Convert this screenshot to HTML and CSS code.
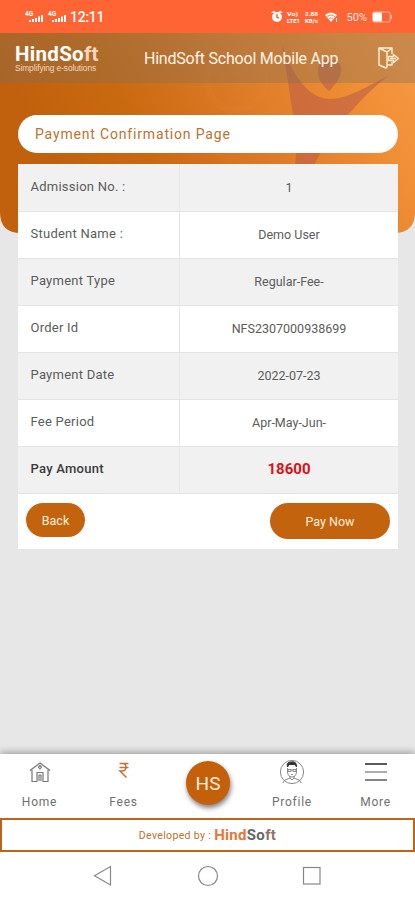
FILE: index.html
```html
<!DOCTYPE html>
<html lang="en">
<head>
<meta charset="utf-8">
<title>Payment Confirmation</title>
<link rel="stylesheet" href="styles.css">
</head>
<body>
<div class="phone">
  <svg class="hero" viewBox="0 0 415 200" preserveAspectRatio="none">
    <defs>
      <linearGradient id="g" x1="0" y1="0.25" x2="1" y2="0">
        <stop offset="0" stop-color="#c1600d"/><stop offset=".25" stop-color="#c9690f"/>
        <stop offset=".5" stop-color="#db7825"/><stop offset=".8" stop-color="#f08e35"/><stop offset="1" stop-color="#f79a46"/>
      </linearGradient>
    </defs>
    <path d="M0 0H415V179Q415 200 394 200H21Q0 200 0 179Z" fill="url(#g)"/>
    <circle cx="236" cy="48" r="29" fill="none" stroke="#ef8c36" stroke-opacity=".12" stroke-width="7"/>
    <g fill="#b95a49" fill-opacity=".55">
      <path d="M329 26C338 26 342 32 341 39C339 48 333 54 329 58C323 53 318 47 318 38Q318 26 329 26Z"/>
      <path d="M282 11C291 39 307 65 329 66C349 66 369 52 388 43Q367 59 348 82C332 102 319 118 308 146H293Q300 108 292 75Q287 42 282 11Z"/>
    </g>
  </svg>
  <div class="status">
    <svg class="signals" width="43" height="14" viewBox="0 0 43 14" fill="#fff">
      <g id="sig"><text x="0" y="6" class="tiny">4G</text><path d="M4 10h2v2H4zM7 9h2v3H7zM10 8h2v4h-2zM13 6.5h2V12h-2zM16 5h2v7h-2z"/></g>
      <use href="#sig" x="23"/>
    </svg>
    <span class="clock">12:11</span>
    <svg class="sysicons" width="70" height="16" viewBox="0 0 70 16" fill="#fff">
      <circle cx="6" cy="8" r="5"/><path d="M0 4L3 1.500L5 3.500M12 4L9 1.500L7 3.500"/><path d="M6 5V8.500L8 9" fill="none" stroke="#ff6534" stroke-width="1.500"/>
      <text x="16" y="6.500" class="mini" textLength="11" lengthAdjust="spacingAndGlyphs">Vo)</text><text x="16" y="13.500" class="mini" textLength="13" lengthAdjust="spacingAndGlyphs">LTE1</text>
      <text x="34" y="6.500" class="mini" textLength="13" lengthAdjust="spacingAndGlyphs">2.88</text><text x="34" y="13.500" class="mini" textLength="13" lengthAdjust="spacingAndGlyphs">KB/s</text>
      <path d="M54 6Q60 1 66 6L60 13Z"/><path d="M56 7.500Q60 4.500 64 7.500M58 9.500Q60 8 62 9.500" stroke="#ff6534" stroke-width=".8" fill="none"/><path d="M65 9h1v4h-1z"/>
    </svg>
    <span class="percent">50%</span>
    <svg width="21" height="12" viewBox="0 0 21 12"><rect x=".7" y="1" width="17.5" height="10" rx="2" fill="none" stroke="#fff" stroke-opacity=".55"/><rect x="1" y="1.5" width="9" height="9" rx="1" fill="#fff"/><path d="M19.5 4v4" stroke="#fff" stroke-opacity=".6"/></svg>
  </div>
  <header class="appbar">
    <div class="logo"><div class="logo-name">HindSo<span class="ft">ft</span></div><div class="logo-tag">Simplifying e-solutions</div></div>
    <h1>HindSoft School Mobile App</h1>
    <svg class="exit" width="22" height="22" viewBox="0 0 22 22" fill="none" stroke="#fff0d8" stroke-width="1.4" stroke-linejoin="round">
      <path d="M14 7V1H1V18L8 21L9 20V5L1 1M9 5L13 2M14 15V18H9"/><path d="M10.500 9.500H15.500V7.500L20.500 11.500L15.500 15.500V13.500H10.500ZM12 11.500H18"/>
    </svg>
  </header>
  <main>
    <h2><span>Payment Confirmation Page</span></h2>
    <section class="card">
      <dl>
        <div class="row"><dt>Admission No. :</dt><dd>1</dd></div>
        <div class="row"><dt>Student Name :</dt><dd>Demo User</dd></div>
        <div class="row"><dt>Payment Type</dt><dd>Regular-Fee-</dd></div>
        <div class="row"><dt>Order Id</dt><dd>NFS2307000938699</dd></div>
        <div class="row"><dt>Payment Date</dt><dd>2022-07-23</dd></div>
        <div class="row"><dt>Fee Period</dt><dd>Apr-May-Jun-</dd></div>
        <div class="row total"><dt>Pay Amount</dt><dd>18600</dd></div>
      </dl>
      <div class="actions"><button class="back">Back</button><button class="pay">Pay Now</button></div>
    </section>
  </main>
  <nav class="tabs">
    <a class="tab"><svg width="22" height="24" viewBox="0 0 22 24" fill="none" stroke="#777" stroke-width="1.2" stroke-linejoin="round"><path d="M1 10.500L11 3L21 10.500M3 10V21.500H8V12.500H14V21.500H19V10M10 21V15H12V21M9.500 7L11 5.500L12.500 7L11 9Z"/></svg><span>Home</span></a>
    <a class="tab"><svg width="12" height="24" viewBox="0 0 12 24" fill="none" stroke="#bd7634" stroke-width="1.500"><path d="M1.500 3.500H10.500M1.500 7.500H10.500M1.500 3.500H4.500Q8 3.500 8 7Q8 11 4 11H2L8.500 17.500"/></svg><span>Fees</span></a>
    <a class="tab"><b class="hs">HS</b></a>
    <a class="tab"><svg width="26" height="26" viewBox="0 0 26 26" fill="none" stroke="#888"><circle cx="13" cy="13" r="11.600"/><path d="M8.500 9V13Q9 18 13 18T17.500 13V9M11 17V19L6 21Q4 22 4 24M15 17V19L20 21Q22 22 22 24M11 19L13 21L15 19"/><path d="M8.500 8Q7 3 12 3Q18 2 17.500 8L16 5.500H10Z" fill="#333" stroke="#333"/><path d="M9 10.500H12V12.500H9ZM14 10.500H17V12.500H14ZM12 11H14M12 15.500H14"/></svg><span>Profile</span></a>
    <a class="tab"><svg width="22" height="24" viewBox="0 0 22 24" fill="none" stroke-width="1.600"><path d="M0 4H22" stroke="#333"/><path d="M0 12H22" stroke="#999"/><path d="M0 20H22" stroke="#666"/></svg><span>More</span></a>
  </nav>
  <footer class="developed"><span>Developed by :</span><strong><em>Hind</em>So<span class="ft2">ft</span></strong></footer>
  <div class="system">
    <svg width="20" height="22" viewBox="0 0 20 22"><path d="M17.500 1.500V20L1.500 10.700Z"/></svg>
    <svg width="22" height="22" viewBox="0 0 22 22"><circle cx="11" cy="11" r="9.500"/></svg>
    <svg width="20" height="22" viewBox="0 0 20 22"><rect x="1.500" y="2.500" width="16.500" height="16.500"/></svg>
  </div>
</div>
</body>
</html>
```
FILE: styles.css
```css
* { box-sizing: border-box; }
body { margin: 0; font-family: Roboto, "Liberation Sans", sans-serif; background: #e7e7e7; }
.phone { position: relative; width: 415px; height: 900px; display: flex; flex-direction: column; overflow: hidden; }
.hero { position: absolute; top: 33px; left: 0; width: 415px; height: 200px; z-index: -1; }
.status { height: 33px; flex: none; display: flex; align-items: center; background: #ff6534; color: #fff; padding: 1px 22px 0 25px; }
.tiny { font-size: 6.5px; font-weight: 700; }
.mini { font-size: 6px; font-weight: 700; }
.clock { font-size: 14px; font-weight: 500; letter-spacing: -.25px; margin-left: 2px; }
.sysicons { margin-left: auto; }
.percent { font-size: 11px; margin: 0 5px 0 6px; opacity: .85; }
.appbar { height: 50px; flex: none; display: flex; align-items: center; background: rgba(128, 110, 90, .37); padding: 0 15px; color: #fff4e5; }
.logo { width: 129px; padding-top: 1px; }
.logo-name { font-size: 20.5px; line-height: 18px; font-weight: 700; letter-spacing: .3px; color: #fff; }
.ft { color: #ffd5bf; }
.logo-tag { font: 8.4px/10px "Liberation Sans", sans-serif; letter-spacing: -.1px; color: #efd8c0; white-space: nowrap; }
h1 { margin: 0; font-size: 16px; font-weight: 400; white-space: nowrap; letter-spacing: -.22px; }
.exit { margin-left: auto; }
main { flex: 1; padding: 32px 17px 0 18px; }
h2 { margin: 0 0 11px; width: 380px; height: 38px; border-radius: 19px; background: #fff; display: flex; align-items: center; padding: 0 0 1px 17px; color: #b8732f; font-size: 14px; font-weight: 400; letter-spacing: .83px; }
.card { background: #fff; height: 385px; width: 380px; }
dl { margin: 0; }
.row { display: flex; height: 47px; border-bottom: 1px solid #e4e4e4; font-size: 13px; }
.row:first-child { height: 48px; }
.row:nth-child(odd) { background: #f1f1f1; }
dt { width: 162px; padding: 0 0 3px 12.5px; display: flex; align-items: center; border-right: 1px solid #e7e7e7; color: #5c5c5c; letter-spacing: .25px; }
dd { flex: 1; margin: 0; padding-bottom: 1px; display: flex; align-items: center; justify-content: center; color: #5c5c5c; font-size: 12.5px; }
.total dt { color: #3a3a3a; font-weight: 500; }
.total dd { color: #dc1018; font-weight: 700; font-size: 15px; padding-bottom: 3px; }
.actions { display: flex; justify-content: space-between; align-items: flex-start; padding: 9px 8px 0; }
button { border: 0; background: #c4630d; color: #fff0df; font: 400 12.5px Roboto, sans-serif; border-radius: 18px; padding: 0; }
.back { width: 59px; height: 34px; }
.pay { width: 120px; height: 36px; }
.tabs { height: 64px; flex: none; background: #fff; display: grid; grid-template-columns: 79px 89px 80px 88px 79px; box-shadow: 0 -2px 7px rgba(0, 0, 0, .3); }
.tab { display: flex; flex-direction: column; align-items: center; color: #707070; font-size: 12px; letter-spacing: .75px; }
.tab svg { height: 26px; margin-top: 5px; }
.tab > span { margin-top: 10px; line-height: 14px; }
.hs { width: 44px; height: 44px; margin-top: 7px; border-radius: 50%; background: #c4600a; color: #ffefdd; display: grid; place-items: center; font-size: 19px; font-weight: 400; letter-spacing: 0; box-shadow: 1px 3px 5px rgba(0, 0, 0, .5); }
.developed { position: relative; height: 34px; flex: none; background: #fff; border: 2px solid #bc6419; display: flex; align-items: center; justify-content: center; color: #b8732f; font-size: 10.5px; letter-spacing: .35px; }
.developed strong { margin-left: 3px; font-size: 15px; letter-spacing: .3px; color: #666; }
.developed em { color: #e8743b; font-style: normal; }
.developed .ft2 { color: #94736a; }
.system { height: 48px; flex: none; background: #fff; display: flex; align-items: center; justify-content: space-between; padding: 0 93px 0 93px; }
.system svg { fill: none; stroke: #888; stroke-width: 1.2; }
```
